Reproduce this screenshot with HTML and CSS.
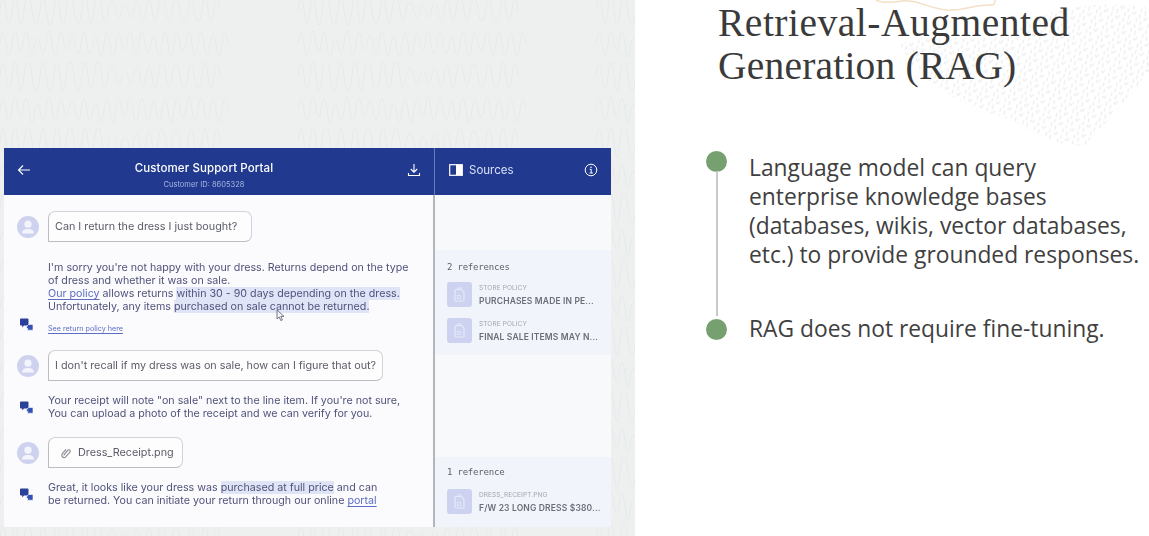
FILE: index.html
```html
<!DOCTYPE html>
<html lang="en">
<head>
<meta charset="utf-8">
<title>Retrieval-Augmented Generation (RAG)</title>
<link rel="stylesheet" href="styles.css">
</head>
<body>
<svg width="0" height="0" class="defs">
  <defs>
    <symbol id="person" viewBox="0 0 22 22"><circle cx="11" cy="11" r="11" fill="#ced2ee"/><circle cx="11" cy="8.200" r="3.600" fill="#f3f4fc"/><path d="M5 17.500c0-3.200 2.500-4.600 6-4.600s6 1.400 6 4.600z" fill="#f3f4fc"/></symbol>
    <symbol id="bot" viewBox="0 0 13 13"><path d="M1 .5h6.500a1 1 0 0 1 1 1v5a1 1 0 0 1-1 1H4L2.200 9.500V7.500H1a1 1 0 0 1-1-1v-5a1 1 0 0 1 1-1z" fill="#2a4099"/><path d="M8.500 6.500H12a1 1 0 0 1 1 1V11a1 1 0 0 1-1 1.200H7.200l.8-1.500L6.500 10V9z" fill="#3350b5" stroke="#fbfbfd" stroke-width=".6"/></symbol>
    <symbol id="doc" viewBox="0 0 25 25"><rect width="25" height="25" rx="3" fill="#ccd2ef"/><path d="M9 7.500h5.500l2.500 2.500v8a1 1 0 0 1-1 1H9a1 1 0 0 1-1-1V8.500a1 1 0 0 1 1-1z" fill="none" stroke="#e6e9f8" stroke-width="1.200"/><path d="M10 6h5" stroke="#e6e9f8" stroke-width="1"/><rect x="10.500" y="13.500" width="3" height="3" fill="none" stroke="#e6e9f8" stroke-width=".8"/></symbol>
  </defs>
</svg>
<main class="slide">
  <section class="demo">
    <svg class="waves" viewBox="0 0 635 536" width="635" height="536" aria-hidden="true">
      <defs>
        <pattern id="wavefield" width="298" height="66" patternUnits="userSpaceOnUse" y="-4">
          <path class="wave-lines" d="M0 14q3 -26 6 0q3 26 6 0q3 -30 6 0q3 30 6 0q4 -34 8 0q4 30 8 0q3 -28 6 0q4 30 8 0q3 -32 6 0q3 30 6 0q4 -30 8 0q4 28 8 0q3 -30 6 0q3 26 6 0q4 -30 8 0q3 22 6 0q4 -16 8 0q3 16 6 0q3 -10 6 0q3 16 6 -2q3 -14 6 2q3 20 6 0q3 -20 6 0q3 24 6 0q4 -26 8 0q3 20 6 0q4 -24 8 0q4 22 8 0q3 -26 6 0q4 24 8 0q3 -28 6 0q3 24 6 0q3 -26 6 0"/>
          <path class="wave-lines" d="M0 48q3 -22 6 0q3 22 6 0q3 -26 6 0q3 14 5 0q3 -24 6 0q3 26 6 0q3 -12 5 0q3 20 6 0q3 -26 6 0q3 22 6 0q3 -24 6 0q3 12 5 0q3 -18 6 0q3 20 6 0q3 -24 6 0q3 22 6 0q3 -14 5 0q3 24 6 0q3 -22 6 0q3 26 6 0q3 -20 6 0q3 12 5 0q3 -26 6 0q3 22 6 0q3 -24 6 0q3 20 6 0q3 -16 5 0q3 22 6 0q3 -24 6 0q3 26 6 0q3 -22 6 0q3 14 6 0q3 -26 6 0q3 22 6 0q3 -24 6 0q3 22 6 0q3 -20 6 0q3 24 6 0q3 -22 6 0"/>
        </pattern>
      </defs>
      <rect width="635" height="536" fill="url(#wavefield)"/>
    </svg>
    <div class="app">
      <div class="chat">
        <header class="bar chat-bar">
          <svg class="ico" viewBox="0 0 14 12" width="14" height="12"><path d="M13 6H1.500M6 1.500 1.500 6 6 10.500" fill="none" stroke="#fff" stroke-width="1.100"/></svg>
          <div class="bar-title">
            <h2>Customer Support Portal</h2>
            <p>Customer ID: 8605328</p>
          </div>
          <svg class="ico" viewBox="0 0 14 14" width="14" height="14"><path d="M7 1v8M3.800 6 7 9.200 10.200 6M1.500 10v2.500h11V10" fill="none" stroke="#fff" stroke-width="1.100"/></svg>
        </header>
        <div class="log">
          <div class="row user first">
            <svg class="avatar"><use href="#person"/></svg>
            <div class="bubble">Can I return the dress I just bought?</div>
          </div>
          <div class="row bot end gap-a">
            <svg class="boticon"><use href="#bot"/></svg>
            <div class="answer">
              <p>I'm sorry you're not happy with your dress. Returns depend on the type<br>of dress and whether it was on sale.<br><a href="#">Our policy</a> allows returns <mark>within 30 - 90 days depending on the dress.</mark><br>Unfortunately, any items <mark>purchased on sale cannot be returned.</mark></p>
              <a class="small-link" href="#">See return policy here</a>
            </div>
          </div>
          <div class="row user gap-b">
            <svg class="avatar"><use href="#person"/></svg>
            <div class="bubble narrow">I don't recall if my dress was on sale, how can I figure that out?</div>
          </div>
          <div class="row bot gap-d">
            <svg class="boticon"><use href="#bot"/></svg>
            <div class="answer"><p>Your receipt will note "on sale" next to the line item. If you're not sure,<br>You can upload a photo of the receipt and we can verify for you.</p></div>
          </div>
          <div class="row user gap-c">
            <svg class="avatar"><use href="#person"/></svg>
            <div class="bubble file">
              <svg viewBox="0 0 12 12" width="11" height="12"><path d="M4 8.500 8.500 3a1.500 1.500 0 0 1 2.300 2L6 10.500a2.600 2.600 0 0 1-3.800-3.300L6.500 2" fill="none" stroke="#8d8f99" stroke-width="1.300"/></svg>
              Dress_Receipt.png
            </div>
          </div>
          <div class="row bot gap-e">
            <svg class="boticon"><use href="#bot"/></svg>
            <div class="answer"><p>Great, it looks like your dress was <mark>purchased at full price</mark> and can<br>be returned. You can initiate your return through our online <a href="#">portal</a></p></div>
          </div>
        </div>
      </div>
      <aside class="sources">
        <header class="bar sources-bar">
          <svg viewBox="0 0 14 12" width="14" height="12"><rect x=".7" y=".7" width="12.600" height="10.600" fill="#213a8f" stroke="#fff" stroke-width="1.200"/><rect x="7" y="1" width="6" height="10" fill="#fff"/></svg>
          <span class="sources-label">Sources</span>
          <svg class="info" viewBox="0 0 14 14" width="14" height="14"><circle cx="7" cy="7" r="5.800" fill="none" stroke="#fff" stroke-width="1"/><path d="M5.800 6.300H7.200V10M5.600 10h3.200" fill="none" stroke="#fff" stroke-width="1"/><circle cx="7" cy="4.200" r=".8" fill="#fff"/></svg>
        </header>
        <div class="refs">
          <div class="ref-group top">
            <h3>2 references</h3>
            <div class="ref">
              <svg class="doc"><use href="#doc"/></svg>
              <div><small>STORE POLICY</small><b>PURCHASES MADE IN PE...</b></div>
            </div>
            <div class="ref">
              <svg class="doc"><use href="#doc"/></svg>
              <div><small>STORE POLICY</small><b>FINAL SALE ITEMS MAY N...</b></div>
            </div>
          </div>
          <div class="ref-group bottom">
            <h3>1 reference</h3>
            <div class="ref">
              <svg class="doc"><use href="#doc"/></svg>
              <div><small>DRESS_RECEIPT.PNG</small><b>F/W 23 LONG DRESS $380...</b></div>
            </div>
          </div>
        </div>
      </aside>
      <svg class="cursor" viewBox="0 0 9 13" width="9" height="13" aria-hidden="true"><path d="M1 1v9l2.200-2 1.600 3.600 1.600-.7L4.800 7.400H8z" fill="#f4f4f8" stroke="#55566a" stroke-width=".8"/></svg>
    </div>
  </section>
  <section class="talk">
    <svg class="decor" viewBox="0 0 514 160" width="514" height="160" aria-hidden="true">
      <defs>
        <pattern id="grain" width="13" height="11" patternUnits="userSpaceOnUse" patternTransform="rotate(28)">
          <path d="M1.500 1.500l1 3.500M6 6l-.6 3.500M9.500 1l1.200 3M11 7l.8 3M3.500 8l.4 2" stroke="#e9ebeb" stroke-width="1.100" stroke-linecap="round"/>
        </pattern>
      </defs>
      <path d="M241 0c6 3 14 3 26 1 14-2 26 7 44 9s26-6 46-5c2 0 3-2 3-5" class="peach"/>
      <path d="M265 45C300 28 345 50 385 28 420 5 470 0 514 8V72C495 95 470 125 450 145 415 150 385 118 345 110 315 95 285 85 265 45z" fill="url(#grain)"/>
    </svg>
    <h1><span class="line-one">Retrieval-Augmented</span><span class="line-two">Generation (RAG)</span></h1>
    <ul class="points">
      <li class="point long"><span class="dot"></span><p>Language model can query<br>enterprise knowledge bases<br>(databases, wikis, vector databases,<br>etc.) to provide grounded responses.</p></li>
      <li class="point"><span class="dot"></span><p>RAG does not require fine-tuning.</p></li>
    </ul>
  </section>
</main>
</body>
</html>
```
FILE: styles.css
```css
* { box-sizing: border-box; }
html, body { margin: 0; padding: 0; height: 536px; overflow: hidden; background: #fff; }
.defs { position: absolute; }
.slide { display: flex; width: 1149px; height: 536px; overflow: hidden; font-family: "Inter", "Liberation Sans", sans-serif; }

.demo { position: relative; flex: 0 0 635px; height: 536px; padding: 148px 0 0 4px; background: #eef0f0; }
.waves { position: absolute; left: 0; top: 0; }
.wave-lines { fill: none; stroke: #e6e9ea; stroke-width: 1; }

.app { position: relative; display: flex; width: 607px; height: 379px; background: #fbfbfd; filter: blur(.3px); }
.cursor { position: absolute; left: 272px; top: 161px; }
.chat { flex: 0 0 431px; border-right: 2px solid #b3b6bc; display: flex; flex-direction: column; }
.sources { flex: 1; display: flex; flex-direction: column; background: #f8f9fa; }
.bar { height: 47px; flex: none; background: #213a8f; color: #fff; display: flex; align-items: center; padding-bottom: 4px; }
.chat-bar { justify-content: space-between; padding-left: 13px; padding-right: 13px; margin-right: -2px; border-right: 1px solid #6a7cb8; }
.bar-title { text-align: center; padding-top: 11px; padding-right: 30px; }
.bar-title h2 { margin: 0; font: 500 11.500px/14px "Inter", sans-serif; letter-spacing: .1px; }
.bar-title p { margin: 5px 0 0; font: 400 7.500px/9px "Inter", sans-serif; color: #a9b6e4; }
.sources-bar { padding-left: 14px; padding-right: 13px; }
.sources-label { margin-left: 6px; font: 400 11.500px/14px "Inter", sans-serif; color: #d9e0f7; }
.info { margin-left: auto; }

.log { padding: 16px 0 0 13px; display: flex; flex-direction: column; color: #50527a; font-size: 10.700px; line-height: 13px; }
.row { display: flex; align-items: center; }
.row.end { align-items: flex-end; }
.gap-a { margin-top: 19px; }
.gap-b { margin-top: 16px; }
.gap-c { margin-top: 17px; }
.gap-d { margin-top: 13px; }
.gap-e { margin-top: 13px; }
.avatar { flex: none; width: 22px; height: 22px; margin-right: 9px; }
.boticon { flex: none; width: 13px; height: 13px; margin: 0 15px 0 3px; }
.row.end .boticon { margin-bottom: 3px; }
.bubble { height: 31px; padding: 0 14px 0 6px; display: flex; align-items: center; gap: 7px; border: 1px solid #d2d3d8; border-left-color: #bcbdc3; border-bottom-color: #bcbdc3; border-radius: 7px 7px 7px 0; background: #fdfdfe; color: #5b5c68; font-size: 10.800px; }
.bubble.narrow { padding-right: 6px; }
.bubble.file { padding: 0 8px 0 11px; }
.answer p { margin: 0; white-space: nowrap; }
.answer a { color: #5d6cc4; text-decoration: underline; text-underline-offset: 2px; }
.answer mark { background: #dfe4f7; color: inherit; }
.small-link { display: block; margin-top: 11px; font-size: 7.200px; line-height: 10px; }

.refs { display: flex; flex-direction: column; flex: 1; }
.ref-group { padding: 12px 6px 0 12px; background: #f1f4fa; }
.ref-group.top { margin-top: 55px; height: 105px; }
.ref-group.bottom { margin-top: auto; height: 70px; padding-top: 10px; }
.ref-group h3 { margin: 0 0 9px; font: 400 9px/11px "DejaVu Sans Mono", monospace; color: #5f6068; letter-spacing: -.2px; }
.ref-group.bottom h3 { margin-bottom: 11px; }
.ref { display: flex; align-items: center; gap: 7px; height: 25px; margin-bottom: 11px; }
.doc { flex: none; width: 25px; height: 25px; }
.ref small { display: block; font-size: 6.500px; line-height: 9px; color: #a3a5ae; letter-spacing: .1px; }
.ref b { display: block; margin-top: 3px; font-size: 8.500px; line-height: 10px; font-weight: 600; color: #6b6d78; white-space: nowrap; letter-spacing: .15px; }

.talk { position: relative; flex: 1; padding: 0 0 0 83px; background: #fff; color: #3b3b3b; }
.decor { position: absolute; left: 0; top: 0; }
.peach { fill: none; stroke: #f4e0c6; stroke-width: 1.500; }
h1 { position: relative; margin: 0; font: 400 39.500px/44.500px "Liberation Serif", serif; color: #3a3a3a; letter-spacing: .5px; }
.line-one { display: block; line-height: 46px; white-space: nowrap; }
.line-two { display: block; margin-top: -2px; white-space: nowrap; letter-spacing: .2px; }
.points { position: relative; list-style: none; margin: 61px 0 0 -12px; padding: 0; }
.point { position: relative; display: flex; gap: 22px; }
.point p { margin: 0; font: 400 22.800px/29px "Open Sans", sans-serif; color: #3f3f3f; }
.long { padding-bottom: 45px; }
.long p { padding-top: 3px; }
.dot { flex: none; width: 21px; height: 21px; margin-top: 5px; border-radius: 50%; background: #76a06f; }
.long .dot { margin-top: 1px; }
.long::after { content: ""; position: absolute; left: 10px; top: 21px; bottom: -2px; width: 2px; background: #c9c9c9; }
```
